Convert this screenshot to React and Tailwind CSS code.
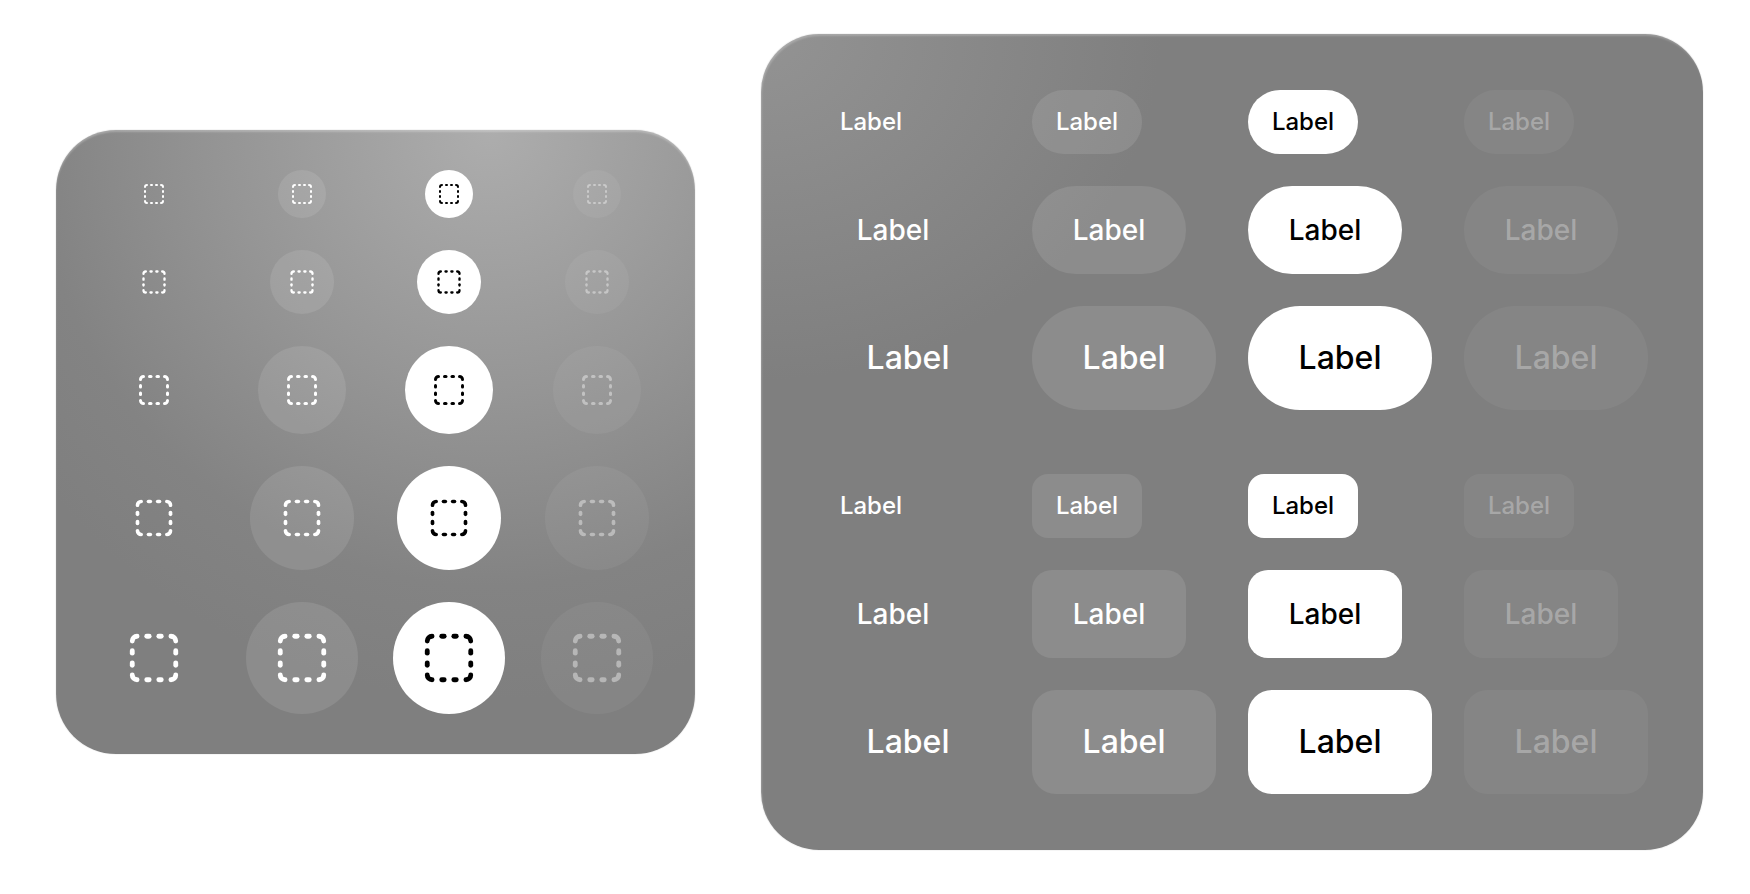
function SquareDashed({ size, className }) {
  return (
    <svg
      width={size}
      height={size}
      viewBox="0 0 24 24"
      fill="none"
      stroke="currentColor"
      strokeWidth="2"
      strokeLinecap="round"
      strokeLinejoin="round"
      className={className}
    >
      <path d="M5 3a2 2 0 0 0-2 2" />
      <path d="M19 3a2 2 0 0 1 2 2" />
      <path d="M21 19a2 2 0 0 1-2 2" />
      <path d="M5 21a2 2 0 0 1-2-2" />
      <path d="M9 3h1" />
      <path d="M9 21h1" />
      <path d="M14 3h1" />
      <path d="M14 21h1" />
      <path d="M3 9v1" />
      <path d="M21 9v1" />
      <path d="M3 14v1" />
      <path d="M21 14v1" />
    </svg>
  );
}

const variants = [
  "text-white",
  "bg-white/10 text-white",
  "bg-white text-black",
  "bg-white/5 text-white/40",
];

const labelVariants = [
  "text-white",
  "bg-white/10 text-white",
  "bg-white text-black",
  "bg-white/5 text-white/30",
];

const iconRows = [
  { box: "h-12 w-12", icon: 24 },
  { box: "h-16 w-16", icon: 28 },
  { box: "h-[88px] w-[88px]", icon: 36 },
  { box: "h-[104px] w-[104px]", icon: 44 },
  { box: "h-28 w-28", icon: 58 },
];

const capsuleRows = [
  { box: "h-16 w-[110px] rounded-full", text: "text-[24px]" },
  { box: "h-[88px] w-[154px] rounded-full", text: "text-[28px]" },
  { box: "h-[104px] w-[184px] rounded-full", text: "text-[32px]" },
];

const roundedRows = [
  { box: "h-16 w-[110px] rounded-2xl", text: "text-[24px]" },
  { box: "h-[88px] w-[154px] rounded-[20px]", text: "text-[28px]" },
  { box: "h-[104px] w-[184px] rounded-3xl", text: "text-[32px]" },
];

function IconCard() {
  return (
    <div className="w-[639px] rounded-[60px] bg-[radial-gradient(circle_at_68%_0%,#adadad_0%,#959595_35%,#838383_60%,#7f7f7f_75%)] px-[42px] py-10 shadow-[inset_0_2px_2px_rgba(255,255,255,0.25),0_0_0_1px_rgba(0,0,0,0.04)]">
      <div className="grid grid-cols-4 gap-x-[35.5px] gap-y-8 items-center justify-items-center">
        {iconRows.map((row, r) =>
          variants.map((v, c) => (
            <button
              key={r + "-" + c}
              className={"flex items-center justify-center rounded-full " + row.box + " " + v}
            >
              <SquareDashed size={row.icon} />
            </button>
          ))
        )}
      </div>
    </div>
  );
}

function LabelGroup({ rows }) {
  return (
    <div className="grid grid-cols-[repeat(4,184px)] gap-x-8 gap-y-8 items-center">
      {rows.map((row, r) =>
        labelVariants.map((v, c) => (
          <button
            key={r + "-" + c}
            className={"flex items-center justify-center font-medium " + row.box + " " + row.text + " " + v}
          >
            Label
          </button>
        ))
      )}
    </div>
  );
}

function LabelCard() {
  return (
    <div className="flex w-[942px] flex-col gap-16 rounded-[58px] bg-[radial-gradient(ellipse_at_0%_0%,#939393_0%,#7f7f7f_30%)] px-[55px] py-14 shadow-[inset_1px_2px_2px_rgba(255,255,255,0.22),0_0_0_1px_rgba(0,0,0,0.04)]">
      <LabelGroup rows={capsuleRows} />
      <LabelGroup rows={roundedRows} />
    </div>
  );
}

export default function App() {
  return (
    <div className="min-h-[894px] bg-white font-['Inter',sans-serif]">
      <div className="flex items-center gap-[66px] pl-14 pt-[34px]">
        <IconCard />
        <LabelCard />
      </div>
    </div>
  );
}
